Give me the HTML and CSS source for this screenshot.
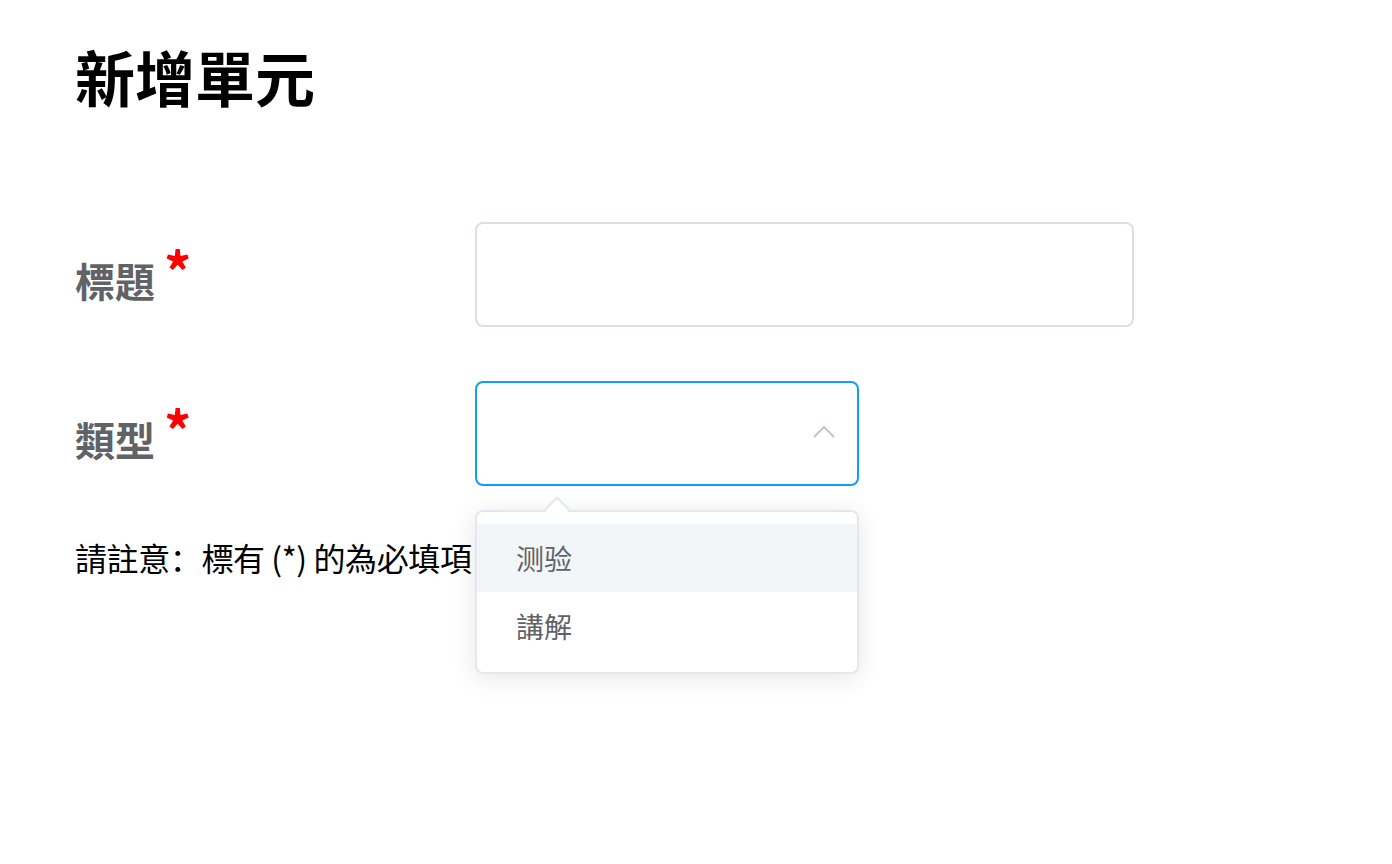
FILE: index.html
```html
<!DOCTYPE html>
<html>
<head>
    <title>新增單元</title>
    <link rel="stylesheet" href="styles.css">
</head>
<body>
    <div class="page">
        <h1 class="page-title">新增單元</h1>

        <form class="unit-form">
            <div class="form-row">
                <label class="form-label">標題<span class="required">*</span></label>
                <div class="form-field">
                    <input class="text-input" type="text">
                </div>
            </div>

            <div class="form-row">
                <label class="form-label">類型<span class="required">*</span></label>
                <div class="form-field">
                    <div class="select is-open">
                        <div class="select-box">
                            <svg class="select-arrow" width="22" height="14" viewBox="0 0 22 14">
                                <path d="M1 13 L11 3 L21 13" fill="none" stroke="#c0c4cc" stroke-width="2"/>
                            </svg>
                        </div>
                        <div class="select-dropdown">
                            <div class="dropdown-caret"></div>
                            <ul class="dropdown-list">
                                <li class="dropdown-item is-hover">测验</li>
                                <li class="dropdown-item">講解</li>
                            </ul>
                        </div>
                    </div>
                </div>
            </div>
        </form>

        <p class="form-note">請註意：標有 (*) 的為必填項</p>
    </div>
</body>
</html>
```

FILE: styles.css
```css
html, body {
    min-height: 100%;
}
body {
    margin: 0;
    min-height: 864px;
    font-family: "Noto Sans CJK TC", "Noto Sans", sans-serif;
    background-color: #fff;
    color: #000;
}
.page {
    padding: 31px 75px 0;
}
.page-title {
    margin: 0;
    font-size: 60px;
    font-weight: bold;
    line-height: 90px;
}
.unit-form {
    margin-top: 101px;
    display: flex;
    flex-direction: column;
    gap: 54px;
}
.form-row {
    display: flex;
    align-items: center;
}
.form-label {
    width: 400px;
    flex-shrink: 0;
    font-size: 40px;
    font-weight: bold;
    color: #606266;
    line-height: 40px;
    margin-top: -6px;
}
.required {
    color: #ff0000;
    margin-left: 9px;
    font-size: 54px;
    line-height: 1;
    vertical-align: 4px;
}
.text-input {
    display: block;
    box-sizing: border-box;
    width: 659px;
    height: 105px;
    border: 2px solid #dcdfe6;
    border-radius: 8px;
    outline: none;
    padding: 0 30px;
    font-size: 28px;
    font-family: inherit;
}
.select {
    position: relative;
    width: 384px;
}
.select-box {
    box-sizing: border-box;
    height: 105px;
    border: 2px solid #139df7;
    border-radius: 8px;
    display: flex;
    align-items: center;
    justify-content: flex-end;
    padding-right: 22px;
}
.select-arrow {
    display: block;
    margin-top: -5px;
}
.select-dropdown {
    position: absolute;
    top: 129px;
    left: 0;
    width: 384px;
    box-sizing: border-box;
    border: 2px solid #e4e7ed;
    border-radius: 8px;
    background-color: #fff;
    box-shadow: 0 4px 24px rgba(0, 0, 0, 0.1);
    z-index: 10;
}
.dropdown-caret {
    position: absolute;
    top: -12px;
    left: 71px;
    width: 16px;
    height: 16px;
    background-color: #fff;
    border-top: 2px solid #e4e7ed;
    border-left: 2px solid #e4e7ed;
    transform: rotate(45deg);
}
.dropdown-list {
    list-style: none;
    margin: 0;
    padding: 12px 0;
    position: relative;
}
.dropdown-item {
    height: 68px;
    line-height: 68px;
    padding: 0 40px 0 39px;
    font-size: 28px;
    color: #606266;
}
.dropdown-item.is-hover {
    background-color: #f3f6f9;
}
.form-note {
    margin: 47px 0 0;
    font-family: "Noto Sans CJK SC", "Noto Sans", sans-serif;
    font-size: 32px;
    line-height: 48px;
    letter-spacing: -0.4px;
}
```
